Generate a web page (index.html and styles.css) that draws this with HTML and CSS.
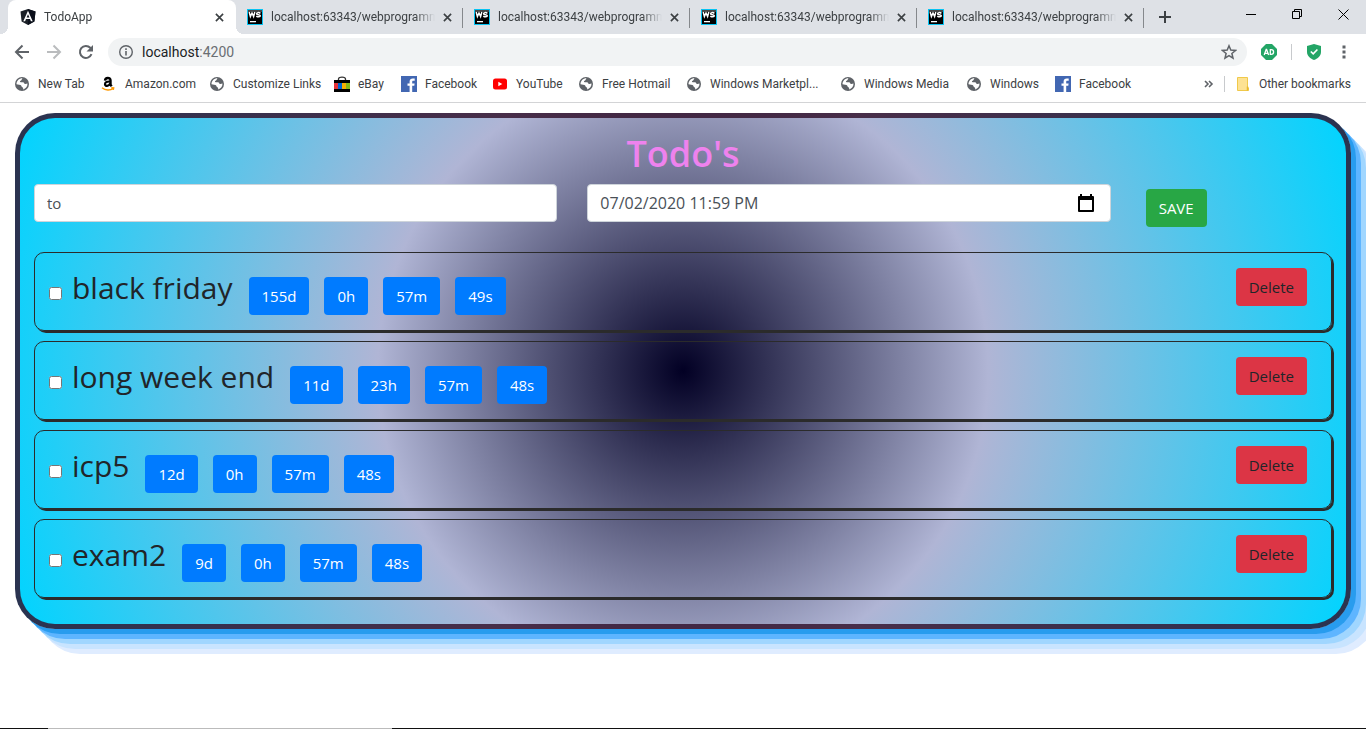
FILE: index.html
```html
<!DOCTYPE html>
<html lang="en">
<head>
<meta charset="utf-8">
<meta name="viewport" content="width=device-width, initial-scale=1">
<title>TodoApp</title>
<link rel="stylesheet" href="styles.css">
</head>
<body>
<svg class="sprite" aria-hidden="true">
  <symbol id="i-close" viewBox="0 0 10 10"><path d="M1 1l8 8M9 1L1 9" fill="none" stroke="#3c4043" stroke-width="1.8"/></symbol>
  <symbol id="i-ws" viewBox="0 0 16 16"><path fill="#07c3f2" d="M0 0h16v16H0z"/><path fill="#000" d="M1 1h14v14H1z"/><path fill="#444" d="M1 1h14v2H1z"/><path d="M2.200 3l1.200 4.600L5 4l1.600 3.600L7.800 3" fill="none" stroke="#fff" stroke-width="1.500"/><path d="M13.400 4.300c-1.200-1-3.800-.9-3.800.4 0 1.500 3.700.6 3.700 2.100 0 1.300-2.700 1.300-4 .3" fill="none" stroke="#fff" stroke-width="1.500"/><path fill="#fff" d="M3 12h6v1.300H3z"/></symbol>
  <symbol id="i-globe" viewBox="0 0 16 16"><circle cx="8" cy="8" r="7" fill="#5f6368"/><path d="M8.500 2.300C7.500 3.500 8 4 7 4.500c-1.300.5-1.500 1.800-.2 1.800h2.400c1 0 .5 1.500 1.800 1.700 1 .1 1.600-.2 2.500-.5.2 3-1.700 5.200-4.300 5.900 0-1.200 0-1.900-.9-2.200-1.100-.3-.6-2-1.800-2.200L2.500 8.300C2.400 5 5 2.300 8.500 2.300z" fill="#fff"/><path d="M2.400 9.300l3 .2c.5 1.500.9 2 2 2.300l.2 1.900C5 13.600 2.900 11.900 2.400 9.300z" fill="#5f6368"/></symbol>
  <symbol id="i-fb" viewBox="0 0 16 16"><path fill="#4267b2" d="M0 0h16v16H0z"/><path fill="#fff" d="M8.600 16V9.800H6.500V7.400h2.100V5.600c0-2.100 1.300-3.200 3.200-3.200l1.900.1v2.200h-1.300c-1 0-1.200.5-1.200 1.200v1.500h2.400l-.3 2.400h-2.100V16z"/></symbol>
</svg>

<header class="browser">
  <div class="tabstrip">
    <div class="tab tab-active">
      <svg class="icon16" viewBox="0 0 16 16" aria-hidden="true"><path fill="#1b2027" d="M8 0l7.500 2.600-1.100 9.800L8 16l-6.400-3.600L.5 2.600z"/><path fill="#0a0f1a" d="M8 0l7.500 2.600-1.100 9.800L8 16z"/><path fill="#fff" fill-rule="evenodd" d="M8 1.800l4.700 10.500h-1.800l-.9-2.300H6l-.9 2.300H3.300zM8 5.200L6.600 8.600h2.800z"/></svg>
      <span class="tab-title">TodoApp</span>
      <button class="tab-close" type="button" aria-label="Close TodoApp"><svg><use href="#i-close"/></svg></button>
    </div>
    <div class="tab">
      <svg class="icon16" aria-hidden="true"><use href="#i-ws"/></svg>
      <span class="tab-title">localhost:63343/webprogramm</span>
      <button class="tab-close" type="button" aria-label="Close tab"><svg><use href="#i-close"/></svg></button>
    </div>
    <div class="tab">
      <svg class="icon16" aria-hidden="true"><use href="#i-ws"/></svg>
      <span class="tab-title">localhost:63343/webprogramm</span>
      <button class="tab-close" type="button" aria-label="Close tab"><svg><use href="#i-close"/></svg></button>
    </div>
    <div class="tab">
      <svg class="icon16" aria-hidden="true"><use href="#i-ws"/></svg>
      <span class="tab-title">localhost:63343/webprogramm</span>
      <button class="tab-close" type="button" aria-label="Close tab"><svg><use href="#i-close"/></svg></button>
    </div>
    <div class="tab">
      <svg class="icon16" aria-hidden="true"><use href="#i-ws"/></svg>
      <span class="tab-title">localhost:63343/webprogramm</span>
      <button class="tab-close" type="button" aria-label="Close tab"><svg><use href="#i-close"/></svg></button>
    </div>
    <button class="new-tab" type="button" aria-label="New tab"><svg viewBox="0 0 12 12"><path d="M6 0v12M0 6h12" stroke="#3c4043" stroke-width="2"/></svg></button>
    <div class="window-controls">
      <button type="button" aria-label="Minimize"><svg viewBox="0 0 11 11"><path d="M0 5.500h10" stroke="#000"/></svg></button>
      <button type="button" aria-label="Restore"><svg viewBox="0 0 11 11"><path d="M.5 2.500h7v7h-7zM2.500 2.500v-2h7v7h-2" fill="none" stroke="#000"/></svg></button>
      <button type="button" aria-label="Close window"><svg viewBox="0 0 11 11"><path d="M.5.5l10 10M10.500.5l-10 10" stroke="#000"/></svg></button>
    </div>
  </div>

  <div class="toolbar">
    <div class="navs">
      <button class="nav" type="button" aria-label="Back"><svg viewBox="0 0 16 16"><path d="M15 8H2.500M8.500 1.500L2 8l6.500 6.500" fill="none" stroke="#5f6368" stroke-width="2"/></svg></button>
      <button class="nav" type="button" aria-label="Forward"><svg viewBox="0 0 16 16"><path d="M1 8h12.500M7.500 1.500L14 8l-6.500 6.500" fill="none" stroke="#babcbe" stroke-width="2"/></svg></button>
      <button class="nav" type="button" aria-label="Reload"><svg viewBox="0 0 16 16"><path d="M13.500 10.200A6 6 0 1 1 12.300 3.800L14 5.500" fill="none" stroke="#5f6368" stroke-width="2"/><path d="M15 1v6.500H8.500z" fill="#5f6368"/></svg></button>
    </div>
    <div class="omnibox">
      <svg class="info" viewBox="0 0 14 14" aria-hidden="true"><circle cx="7" cy="7" r="6.300" fill="none" stroke="#5f6368" stroke-width="1.400"/><path d="M6.200 6h1.600v4.500H6.200zM6.200 3.300h1.600v1.600H6.200z" fill="#5f6368"/></svg>
      <span class="url">localhost<span class="port">:4200</span></span>
      <button class="star" type="button" aria-label="Bookmark this tab"><svg viewBox="0 0 16 16"><path d="M8 1.800l1.800 4.300 4.700.4-3.600 3 1.100 4.600-4-2.500-4 2.500 1.100-4.600-3.600-3 4.700-.4z" fill="none" stroke="#5f6368" stroke-width="1.500"/></svg></button>
    </div>
    <button class="ext" type="button" aria-label="AD"><svg viewBox="0 0 16 16"><path d="M5 0h6l5 5v6l-5 5H5l-5-5V5z" fill="#23a566"/><path d="M3.200 11l2-5.500h.4l2 5.500M3.900 9.300h3" fill="none" stroke="#fff" stroke-width="1.300"/><path d="M9.300 5.700v4.600h.9c3.200 0 3.200-4.600 0-4.600z" fill="none" stroke="#fff" stroke-width="1.300"/></svg></button>
    <span class="divider"></span>
    <button class="ext" type="button" aria-label="Protection"><svg viewBox="0 0 16 16"><path d="M8 0l7 2v6c0 4-3.500 6.700-7 8-3.500-1.300-7-4-7-8V2z" fill="#23a566"/><path d="M4.800 7.500l2.400 2.400 4.200-4.400" fill="none" stroke="#fff" stroke-width="1.600"/></svg></button>
    <button class="ext" type="button" aria-label="Menu"><svg viewBox="0 0 16 16"><path d="M6.500 1.500h3v3h-3zM6.500 6.500h3v3h-3zM6.500 11.500h3v3h-3z" fill="#5f6368"/></svg></button>
  </div>

  <nav class="bookmarks" aria-label="Bookmarks">
    <div class="bookmark-list">
      <a href="#"><svg class="icon16"><use href="#i-globe"/></svg>New Tab</a>
      <a href="#"><svg class="icon16" viewBox="0 0 16 16"><path d="M4 4.600C4.200 1 9.500 1.200 9.500 4.300v4.500l1.200 1.400" fill="none" stroke="#000" stroke-width="2.400"/><path d="M9 5.500C5.500 5.300 4 6.400 4 8.200c0 2.300 4 2.300 5.200-.8" fill="none" stroke="#000" stroke-width="2.200"/><path d="M1 11.800c3.500 2.900 8.300 2.900 11.300.6M10.300 11.800l2.400.1-.4 2" fill="none" stroke="#f90" stroke-width="1.400"/></svg>Amazon.com</a>
      <a href="#"><svg class="icon16"><use href="#i-globe"/></svg>Customize Links</a>
      <a href="#"><svg class="icon16" viewBox="0 0 16 16"><path d="M4.500 5V3c0-2.500 7-2.500 7 0v2" fill="none" stroke="#333" stroke-width="1.300"/><path fill="#000" d="M0 4h16v12H0z"/><path fill="#e53238" d="M0 7h4v6H0z"/><path fill="#0064d2" d="M4 7h4v6H4z"/><path fill="#f5af02" d="M8 7h4v6H8z"/><path fill="#86b817" d="M12 7h4v6h-4z"/></svg>eBay</a>
      <a href="#"><svg class="icon16"><use href="#i-fb"/></svg>Facebook</a>
      <a href="#"><svg class="icon16" viewBox="0 0 16 16"><rect x="1" y="2.500" width="14" height="11" rx="2.500" fill="#f00"/><path fill="#fff" d="M6.300 5.700v4.600L10.300 8z"/></svg>YouTube</a>
      <a href="#"><svg class="icon16"><use href="#i-globe"/></svg>Free Hotmail</a>
      <a href="#"><svg class="icon16"><use href="#i-globe"/></svg>Windows Marketpl...</a>
      <a href="#"><svg class="icon16"><use href="#i-globe"/></svg>Windows Media</a>
      <a href="#"><svg class="icon16"><use href="#i-globe"/></svg>Windows</a>
      <a href="#"><svg class="icon16"><use href="#i-fb"/></svg>Facebook</a>
    </div>
    <button class="more" type="button" aria-label="More bookmarks"><svg viewBox="0 0 10 8"><path d="M1 1l3 3-3 3M5 1l3 3-3 3" fill="none" stroke="#5f6368" stroke-width="1.600"/></svg></button>
    <span class="divider"></span>
    <a class="other" href="#"><svg class="icon16" viewBox="0 0 16 16"><path d="M2.500 1.500h10v9.500l1 1v2.500h-11z" fill="#fde293" stroke="#f0c94a"/><path d="M12.500 10.500v4" stroke="#e8b92e" stroke-width="1.500"/></svg>Other bookmarks</a>
  </nav>
</header>

<main class="page">
  <section class="panel">
    <h1>Todo's</h1>
    <form class="entry">
      <input class="field" type="text" value="to" aria-label="Todo">
      <div class="date-field">
        <input type="text" value="07/02/2020 11:59 PM" aria-label="Due date">
        <button type="button" aria-label="Pick a date"><svg viewBox="0 0 16 18"><path d="M1 3h14v14H1z" fill="none" stroke="#000" stroke-width="2" stroke-linejoin="round"/><path d="M1 2h14v4H1zM2 0h2v3H2zM12 0h2v3h-2z"/></svg></button>
      </div>
      <button class="btn save" type="button">SAVE</button>
    </form>
    <ul class="todos">
      <li class="todo">
        <input type="checkbox" id="t1"><label for="t1">black friday</label>
        <div class="times"><button class="btn" type="button">155d</button><button class="btn" type="button">0h</button><button class="btn" type="button">57m</button><button class="btn" type="button">49s</button></div>
        <button class="btn delete" type="button">Delete</button>
      </li>
      <li class="todo">
        <input type="checkbox" id="t2"><label for="t2">long week end</label>
        <div class="times"><button class="btn" type="button">11d</button><button class="btn" type="button">23h</button><button class="btn" type="button">57m</button><button class="btn" type="button">48s</button></div>
        <button class="btn delete" type="button">Delete</button>
      </li>
      <li class="todo">
        <input type="checkbox" id="t3"><label for="t3">icp5</label>
        <div class="times"><button class="btn" type="button">12d</button><button class="btn" type="button">0h</button><button class="btn" type="button">57m</button><button class="btn" type="button">48s</button></div>
        <button class="btn delete" type="button">Delete</button>
      </li>
      <li class="todo">
        <input type="checkbox" id="t4"><label for="t4">exam2</label>
        <div class="times"><button class="btn" type="button">9d</button><button class="btn" type="button">0h</button><button class="btn" type="button">57m</button><button class="btn" type="button">48s</button></div>
        <button class="btn delete" type="button">Delete</button>
      </li>
    </ul>
  </section>
</main>
<footer class="taskbar"><span></span></footer>
</body>
</html>
```
FILE: styles.css
```css
* { box-sizing: border-box; }

body {
  margin: 0;
  min-height: 100vh;
  display: flex;
  flex-direction: column;
  overflow-x: hidden;
  background: #fff;
  color: #212529;
  font-family: "Open Sans", "Noto Sans", sans-serif;
  font-size: 15px;
  line-height: 24px;
}

button {
  border: 0;
  padding: 0;
  background: none;
  font: inherit;
  color: inherit;
}

svg { display: block; }
.sprite { position: absolute; width: 0; height: 0; }
.icon16 { width: 16px; height: 16px; flex: none; }
.divider { width: 1px; height: 16px; background: #c8cacd; }

/* Browser frame */
.browser {
  font-family: Roboto, "Open Sans", sans-serif;
  font-size: 12px;
  line-height: 16px;
  color: #3c4043;
  border-bottom: 1px solid #d3d4d6;
}

.tabstrip {
  display: flex;
  height: 34px;
  padding-left: 8px;
  background: #dee1e6;
}

.tab {
  display: flex;
  align-items: center;
  gap: 8px;
  flex: 0 1 227px;
  min-width: 0;
  padding: 0 11px;
  background: linear-gradient(#85888c, #85888c) right 8px / 1px 20px no-repeat;
}

.tab-active {
  position: relative;
  flex-basis: 228px;
  padding: 0 12px;
  background: #fff;
  border-radius: 8px 8px 0 0;
}

.tab-active::before,
.tab-active::after {
  content: "";
  position: absolute;
  bottom: 0;
  width: 8px;
  height: 8px;
}
.tab-active::before { left: -8px; background: radial-gradient(circle at 0 0, #dee1e6 8px, #fff 8px); }
.tab-active::after { right: -8px; background: radial-gradient(circle at 100% 0, #dee1e6 8px, #fff 8px); }

.tab-title {
  flex: 1;
  min-width: 0;
  overflow: hidden;
  white-space: nowrap;
  -webkit-mask-image: linear-gradient(to left, transparent, #000 20px);
  mask-image: linear-gradient(to left, transparent, #000 20px);
}

.tab-close svg { width: 9px; height: 9px; }
.new-tab { margin-left: 15px; }
.new-tab svg { width: 12px; height: 12px; }

.window-controls {
  display: flex;
  align-items: flex-start;
  margin-left: auto;
}
.window-controls button { padding: 9px 17px 0 18px; }
.window-controls svg { width: 11px; height: 11px; }

.toolbar {
  display: flex;
  align-items: center;
  gap: 14px;
  height: 36px;
  padding: 0 14px;
}
.navs { display: flex; gap: 16px; }
.nav svg { width: 16px; height: 16px; }

.omnibox {
  flex: 1;
  display: flex;
  align-items: center;
  gap: 9px;
  height: 28px;
  padding: 0 10px 0 11px;
  border-radius: 14px;
  background: #f1f3f4;
  font-size: 14px;
  color: #202124;
}
.info { width: 14px; height: 14px; }
.url { flex: 1; }
.port { color: #6a6e73; }
.star svg, .ext svg { width: 16px; height: 16px; }

.bookmarks {
  display: flex;
  align-items: center;
  height: 32px;
  padding: 0 15px 4px 14px;
}
.bookmark-list {
  flex: 1;
  display: grid;
  grid-template-columns: 87px 108px 125px 67px 91px 86px 108px 154px 126px 89px 90px;
}
.bookmarks a {
  display: flex;
  align-items: center;
  gap: 8px;
  color: inherit;
  text-decoration: none;
  white-space: nowrap;
}
.more { margin-right: 10px; }
.more svg { width: 10px; height: 8px; }
.bookmarks .other { margin-left: 10px; }

/* Page */
.page { flex: 1; padding: 10px 15px; }

.panel {
  padding: 12px 14px 26px;
  border: 5px solid rgba(50, 18, 44, 0.83);
  border-radius: 40px;
  background: radial-gradient(circle, #020024 0%, #b0b5d5 43%, #00d4ff 100%);
  box-shadow: 5px 5px #289cee, 10px 10px #5eb5ff, 15px 15px #a0d6ff, 20px 20px #c8e4ff, 25px 25px #dfecff;
}

h1 {
  margin: 0 0 6px;
  font-size: 36px;
  line-height: 48px;
  font-weight: 600;
  text-align: center;
  color: violet;
}

.entry {
  display: grid;
  grid-template-columns: repeat(12, 1fr);
  column-gap: 30px;
  align-items: start;
}

.field,
.date-field {
  grid-column: span 5;
  width: 100%;
  height: 38px;
  padding: 0 12px;
  border: 1px solid #ced4da;
  border-radius: 4px;
  background: #fff;
  font: inherit;
  color: #495057;
}

.date-field { display: flex; align-items: center; padding-right: 16px; font-size: 16px; }
.date-field input {
  flex: 1;
  min-width: 0;
  padding: 0;
  border: 0;
  background: none;
  font: inherit;
  color: inherit;
}
.date-field svg { width: 16px; height: 18px; }

.btn {
  height: 38px;
  padding: 0 13px;
  border-radius: 4px;
  background: #007bff;
  color: #fff;
}
.save { grid-column: span 2; justify-self: start; margin: 5px; background: #28a745; }

.todos {
  display: grid;
  gap: 10px;
  margin: 20px 0 0;
  padding: 0;
  list-style: none;
}
.todo {
  display: flex;
  align-items: flex-start;
  padding: 15px 24px 15px 14px;
  border: 1px solid #2b2b2b;
  border-radius: 10px;
  box-shadow: 2px 2px #2b2b2b;
}
.todo input { width: 13px; height: 13px; margin: 19px 10px 0 0; }
.todo label {
  font-size: 30px;
  line-height: 40px;
}
.times { display: flex; gap: 15px; padding: 9px 0 0 16px; }
.delete { margin-left: auto; background: #dc3545; color: #212529; }

.taskbar { background: #111; padding-left: 48px; }
.taskbar span { display: block; width: 344px; height: 1px; background: #bbb; }
```
